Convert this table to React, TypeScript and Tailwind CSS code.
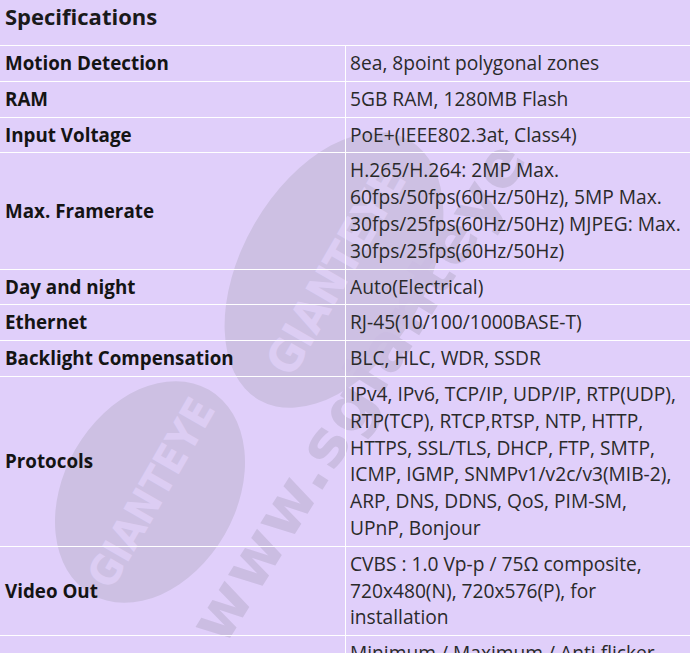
import React from "react";

const rows: { label: string; lines: string[] }[] = [
  { label: "Motion Detection", lines: ["8ea, 8point polygonal zones"] },
  { label: "RAM", lines: ["5GB RAM, 1280MB Flash"] },
  { label: "Input Voltage", lines: ["PoE+(IEEE802.3at, Class4)"] },
  {
    label: "Max. Framerate",
    lines: [
      "H.265/H.264: 2MP Max.",
      "60fps/50fps(60Hz/50Hz), 5MP Max.",
      "30fps/25fps(60Hz/50Hz) MJPEG: Max.",
      "30fps/25fps(60Hz/50Hz)",
    ],
  },
  { label: "Day and night", lines: ["Auto(Electrical)"] },
  { label: "Ethernet", lines: ["RJ-45(10/100/1000BASE-T)"] },
  { label: "Backlight Compensation", lines: ["BLC, HLC, WDR, SSDR"] },
  {
    label: "Protocols",
    lines: [
      "IPv4, IPv6, TCP/IP, UDP/IP, RTP(UDP),",
      "RTP(TCP), RTCP,RTSP, NTP, HTTP,",
      "HTTPS, SSL/TLS, DHCP, FTP, SMTP,",
      "ICMP, IGMP, SNMPv1/v2c/v3(MIB-2),",
      "ARP, DNS, DDNS, QoS, PIM-SM,",
      "UPnP, Bonjour",
    ],
  },
  {
    label: "Video Out",
    lines: [
      "CVBS : 1.0 Vp-p / 75Ω composite,",
      "720x480(N), 720x576(P), for",
      "installation",
    ],
  },
  {
    label: "Electronic Shutter Speed",
    lines: [
      "Minimum / Maximum / Anti flicker",
      "(2~1/12,000sec)",
      "Preferred Shutter (1/5~1/12,000sec)",
    ],
  },
];

function Watermark() {
  return (
    <svg
      className="pointer-events-none absolute left-0 top-0"
      width="690"
      height="653"
      viewBox="0 0 690 653"
    >
      <g transform="rotate(-60 334 270)">
        <ellipse cx="334" cy="270" rx="150" ry="92" fill="#cdc0e3" />
        <text
          x="334"
          y="288"
          textAnchor="middle"
          fontFamily="'Liberation Sans Narrow', 'DejaVu Sans Condensed', sans-serif"
          fontWeight="700"
          fontSize="46"
          fill="#dccdf3"
        >
          GIANTEYE
        </text>
      </g>
      <g transform="rotate(-60 150 492)">
        <ellipse cx="150" cy="492" rx="118" ry="86" fill="#cdc0e3" />
        <text
          x="150"
          y="508"
          textAnchor="middle"
          fontFamily="'Liberation Sans Narrow', 'DejaVu Sans Condensed', sans-serif"
          fontWeight="700"
          fontSize="42"
          fill="#dccdf3"
        >
          GIANTEYE
        </text>
      </g>
      <g transform="rotate(-58 360 392)">
        <text
          x="360"
          y="412"
          textAnchor="middle"
          fontFamily="'DejaVu Sans', sans-serif"
          fontWeight="700"
          fontSize="64"
          fill="#cbbde2"
          letterSpacing="2"
        >
          www.sgianteye
        </text>
      </g>
    </svg>
  );
}

export default function App() {
  return (
    <div
      className="relative h-[653px] w-[690px] overflow-hidden bg-[#e0cffa] text-[#1c1c1c]"
      style={{ fontFamily: "'Open Sans', 'Noto Sans', sans-serif" }}
    >
      <Watermark />
      <div className="relative">
        <div className="h-[46px] border-b border-white px-[5px] text-[22px] font-bold leading-[32px] text-[#1a1a1a]">
          Specifications
        </div>
        {rows.map((r) => (
          <div key={r.label} className="flex border-b border-white">
            <div className="flex w-[346px] shrink-0 items-center border-r border-white px-[5px] py-[4px] text-[18.8px] font-bold leading-[26.8px] text-[#141414]">
              {r.label}
            </div>
            <div className="flex-1 py-[4px] pl-[4px] pr-[5px] text-[19.2px] leading-[26.8px] text-[#2a2a2a]">
              {r.lines.map((l, i) => (
                <div key={i} className="whitespace-nowrap">
                  {l}
                </div>
              ))}
            </div>
          </div>
        ))}
      </div>
    </div>
  );
}
